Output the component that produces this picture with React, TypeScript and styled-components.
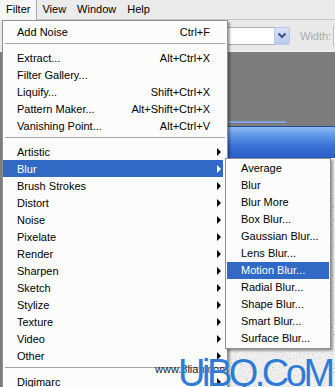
import React from "react";
import styled, { createGlobalStyle } from "styled-components";

const GlobalStyle = createGlobalStyle`
  html, body {
    margin: 0;
    padding: 0;
    background: #ebebeb;
  }
  body {
    font-family: "Liberation Sans", Arial, sans-serif;
    font-size: 11px;
    color: #000;
  }
`;

type Entry =
  | { kind: "item"; label: string; shortcut?: string; sub?: boolean; active?: boolean }
  | { kind: "sep" };

const filterMenu: Entry[] = [
  { kind: "item", label: "Add Noise", shortcut: "Ctrl+F" },
  { kind: "sep" },
  { kind: "item", label: "Extract...", shortcut: "Alt+Ctrl+X" },
  { kind: "item", label: "Filter Gallery..." },
  { kind: "item", label: "Liquify...", shortcut: "Shift+Ctrl+X" },
  { kind: "item", label: "Pattern Maker...", shortcut: "Alt+Shift+Ctrl+X" },
  { kind: "item", label: "Vanishing Point...", shortcut: "Alt+Ctrl+V" },
  { kind: "sep" },
  { kind: "item", label: "Artistic", sub: true },
  { kind: "item", label: "Blur", sub: true, active: true },
  { kind: "item", label: "Brush Strokes", sub: true },
  { kind: "item", label: "Distort", sub: true },
  { kind: "item", label: "Noise", sub: true },
  { kind: "item", label: "Pixelate", sub: true },
  { kind: "item", label: "Render", sub: true },
  { kind: "item", label: "Sharpen", sub: true },
  { kind: "item", label: "Sketch", sub: true },
  { kind: "item", label: "Stylize", sub: true },
  { kind: "item", label: "Texture", sub: true },
  { kind: "item", label: "Video", sub: true },
  { kind: "item", label: "Other", sub: true },
  { kind: "sep" },
  { kind: "item", label: "Digimarc", sub: true },
];

const blurMenu = [
  "Average",
  "Blur",
  "Blur More",
  "Box Blur...",
  "Gaussian Blur...",
  "Lens Blur...",
  "Motion Blur...",
  "Radial Blur...",
  "Shape Blur...",
  "Smart Blur...",
  "Surface Blur...",
];

const Frame = styled.div`
  position: relative;
  width: 335px;
  height: 387px;
  overflow: hidden;
  display: flex;
  flex-direction: column;
  background: #ebebeb;
`;

const MenuBar = styled.div`
  display: flex;
  height: 19px;
  flex-shrink: 0;
  background: #ebebeb;
`;

const MenuTitle = styled.div<{ $open?: boolean; $gap?: number }>`
  padding: 0 ${({ $gap }) => $gap ?? 5}px;
  line-height: 19px;
  height: 20px;
  box-sizing: border-box;
  ${({ $open }) =>
    $open &&
    `
    position: relative;
    z-index: 3;
    background: #f6f6f6;
    border-right: 1px solid #a9a9a9;
  `}
`;

const OptionsBar = styled.div`
  display: flex;
  align-items: center;
  height: 33px;
  flex-shrink: 0;
  box-sizing: border-box;
  padding-left: 141px;
  border-top: 1px solid #c6c6c6;
  border-bottom: 1px solid #f2f2f2;
  background: #e9e9e9;
`;

const ComboBox = styled.div`
  display: flex;
`;

const ComboField = styled.div`
  width: 134px;
  height: 18px;
  box-sizing: border-box;
  border: 1px solid #a7afba;
  background: #fff;
`;

const ComboButton = styled.div`
  width: 16px;
  height: 18px;
  margin-left: -1px;
  box-sizing: border-box;
  border: 1px solid #b9c8e4;
  border-radius: 2px;
  background: linear-gradient(#d6e2f8, #b6cbee);
  display: flex;
  align-items: center;
  justify-content: center;
`;

const OptionLabel = styled.span`
  margin-left: 10px;
  color: #a9a9a9;
`;

const OptionInput = styled.div`
  width: 40px;
  height: 18px;
  margin-left: 2px;
  flex-shrink: 0;
  box-sizing: border-box;
  border: 1px solid #b9b9b9;
  background: #fff;
`;

const Workspace = styled.div`
  flex: 1;
  display: flex;
  flex-direction: column;
  padding-top: 69px;
  background: #7c7c7c;
`;

const DocEdge = styled.div`
  height: 2px;
  width: 62px;
  margin-left: 224px;
  border-radius: 0 2px 2px 0;
  background: #7fa3e0;
`;

const DocWindow = styled.div`
  flex: 1;
  display: flex;
  flex-direction: column;
  margin: 3px 0 0 200px;
`;

const DocTitle = styled.div`
  height: 31px;
  flex-shrink: 0;
  border-top: 1px solid #244f9e;
  background: linear-gradient(#8dbaf2 0%, #5d95e6 30%, #3b74d6 60%, #2a5cc2 100%);
`;

const DocCanvas = styled.div`
  flex: 1;
  background: #c4c4c4;
  overflow: hidden;
`;

const Menu = styled.div`
  position: absolute;
  z-index: 2;
  top: 20px;
  left: 2px;
  width: 226px;
  height: 380px;
  box-sizing: border-box;
  padding: 2px 4px 2px 0;
  border: 1px solid #8f8f8f;
  background: #fcfcfc;
  box-shadow: 2px 2px 2px rgba(0, 0, 0, 0.35);
`;

const SubMenu = styled.div`
  position: absolute;
  z-index: 4;
  top: -2px;
  left: calc(100% + 2px);
  width: 106px;
  box-sizing: border-box;
  padding: 1px;
  border: 1px solid #8f8f8f;
  background: #fcfcfc;
  color: #000;
  box-shadow: 2px 2px 2px rgba(0, 0, 0, 0.35);
`;

const Row = styled.div<{ $active?: boolean }>`
  position: relative;
  display: grid;
  grid-template-columns: 1fr auto 11px;
  align-items: center;
  height: 17px;
  padding: 0 2px 0 14px;
  white-space: nowrap;
  background: ${({ $active }) => ($active ? "#316ac5" : "transparent")};
  color: ${({ $active }) => ($active ? "#fff" : "#000")};
`;

const SubRow = styled.div<{ $active?: boolean }>`
  height: 17px;
  line-height: 17px;
  padding-left: 14px;
  white-space: nowrap;
  background: ${({ $active }) => ($active ? "#316ac5" : "transparent")};
  color: ${({ $active }) => ($active ? "#fff" : "#000")};
`;

const Shortcut = styled.span`
  padding-left: 12px;
`;

const ArrowCell = styled.span`
  display: flex;
  justify-content: flex-end;
`;

const Arrow = styled.span<{ $light?: boolean }>`
  width: 0;
  height: 0;
  border-top: 4px solid transparent;
  border-bottom: 4px solid transparent;
  border-left: 4px solid ${({ $light }) => ($light ? "#fff" : "#000")};
`;

const Separator = styled.div`
  height: 1px;
  margin: 3px -2px 5px 2px;
  background: #a5a5a5;
`;

const SiteMark = styled.div`
  position: absolute;
  z-index: 5;
  left: 155px;
  top: 363px;
  font-size: 11px;
  color: #222;
`;

const LogoMark = styled.div`
  position: absolute;
  z-index: 6;
  left: 178px;
  top: 354px;
  font-size: 38px;
  line-height: 38px;
  letter-spacing: -3.5px;
  color: #2e7bd7;
  text-shadow: 0 0 1px #fff;
`;

const Chevron = () => (
  <svg width="10" height="7" viewBox="0 0 10 7">
    <polyline points="1.5,1.5 5,5 8.5,1.5" fill="none" stroke="#3e5577" strokeWidth="2" />
  </svg>
);

const Grain = () => (
  <svg width="100%" height="100%" preserveAspectRatio="none">
    <filter id="grain" x="0" y="0" width="100%" height="100%">
      <feTurbulence type="fractalNoise" baseFrequency="0.95" numOctaves="2" seed="4" />
      <feColorMatrix
        type="matrix"
        values="0.33 0.33 0.33 0 0  0.33 0.33 0.33 0 0  0.33 0.33 0.33 0 0  0 0 0 0 1"
      />
      <feComponentTransfer>
        <feFuncR type="discrete" tableValues="0.12 0.5 0.8 0.9 0.97 1" />
        <feFuncG type="discrete" tableValues="0.12 0.5 0.8 0.9 0.97 1" />
        <feFuncB type="discrete" tableValues="0.12 0.5 0.8 0.9 0.97 1" />
      </feComponentTransfer>
    </filter>
    <rect width="100%" height="100%" filter="url(#grain)" />
  </svg>
);

export default function App() {
  return (
    <Frame>
      <GlobalStyle />
      <MenuBar>
        <MenuTitle $open $gap={6}>Filter</MenuTitle>
        <MenuTitle>View</MenuTitle>
        <MenuTitle $gap={6}>Window</MenuTitle>
        <MenuTitle>Help</MenuTitle>
      </MenuBar>
      <OptionsBar>
        <ComboBox>
          <ComboField />
          <ComboButton>
            <Chevron />
          </ComboButton>
        </ComboBox>
        <OptionLabel>Width:</OptionLabel>
        <OptionInput />
      </OptionsBar>
      <Workspace>
        <DocEdge />
        <DocWindow>
          <DocTitle />
          <DocCanvas>
            <Grain />
          </DocCanvas>
        </DocWindow>
      </Workspace>

      <Menu>
        {filterMenu.map((entry, i) =>
          entry.kind === "sep" ? (
            <Separator key={i} />
          ) : (
            <Row key={i} $active={entry.active}>
              <span>{entry.label}</span>
              <Shortcut>{entry.shortcut}</Shortcut>
              <ArrowCell>{entry.sub && <Arrow $light={entry.active} />}</ArrowCell>
              {entry.active && (
                <SubMenu>
                  {blurMenu.map((label) => (
                    <SubRow key={label} $active={label === "Motion Blur..."}>
                      {label}
                    </SubRow>
                  ))}
                </SubMenu>
              )}
            </Row>
          )
        )}
      </Menu>

      <SiteMark>www.3lian.com</SiteMark>
      <LogoMark>UiBQ.CoM</LogoMark>
    </Frame>
  );
}
